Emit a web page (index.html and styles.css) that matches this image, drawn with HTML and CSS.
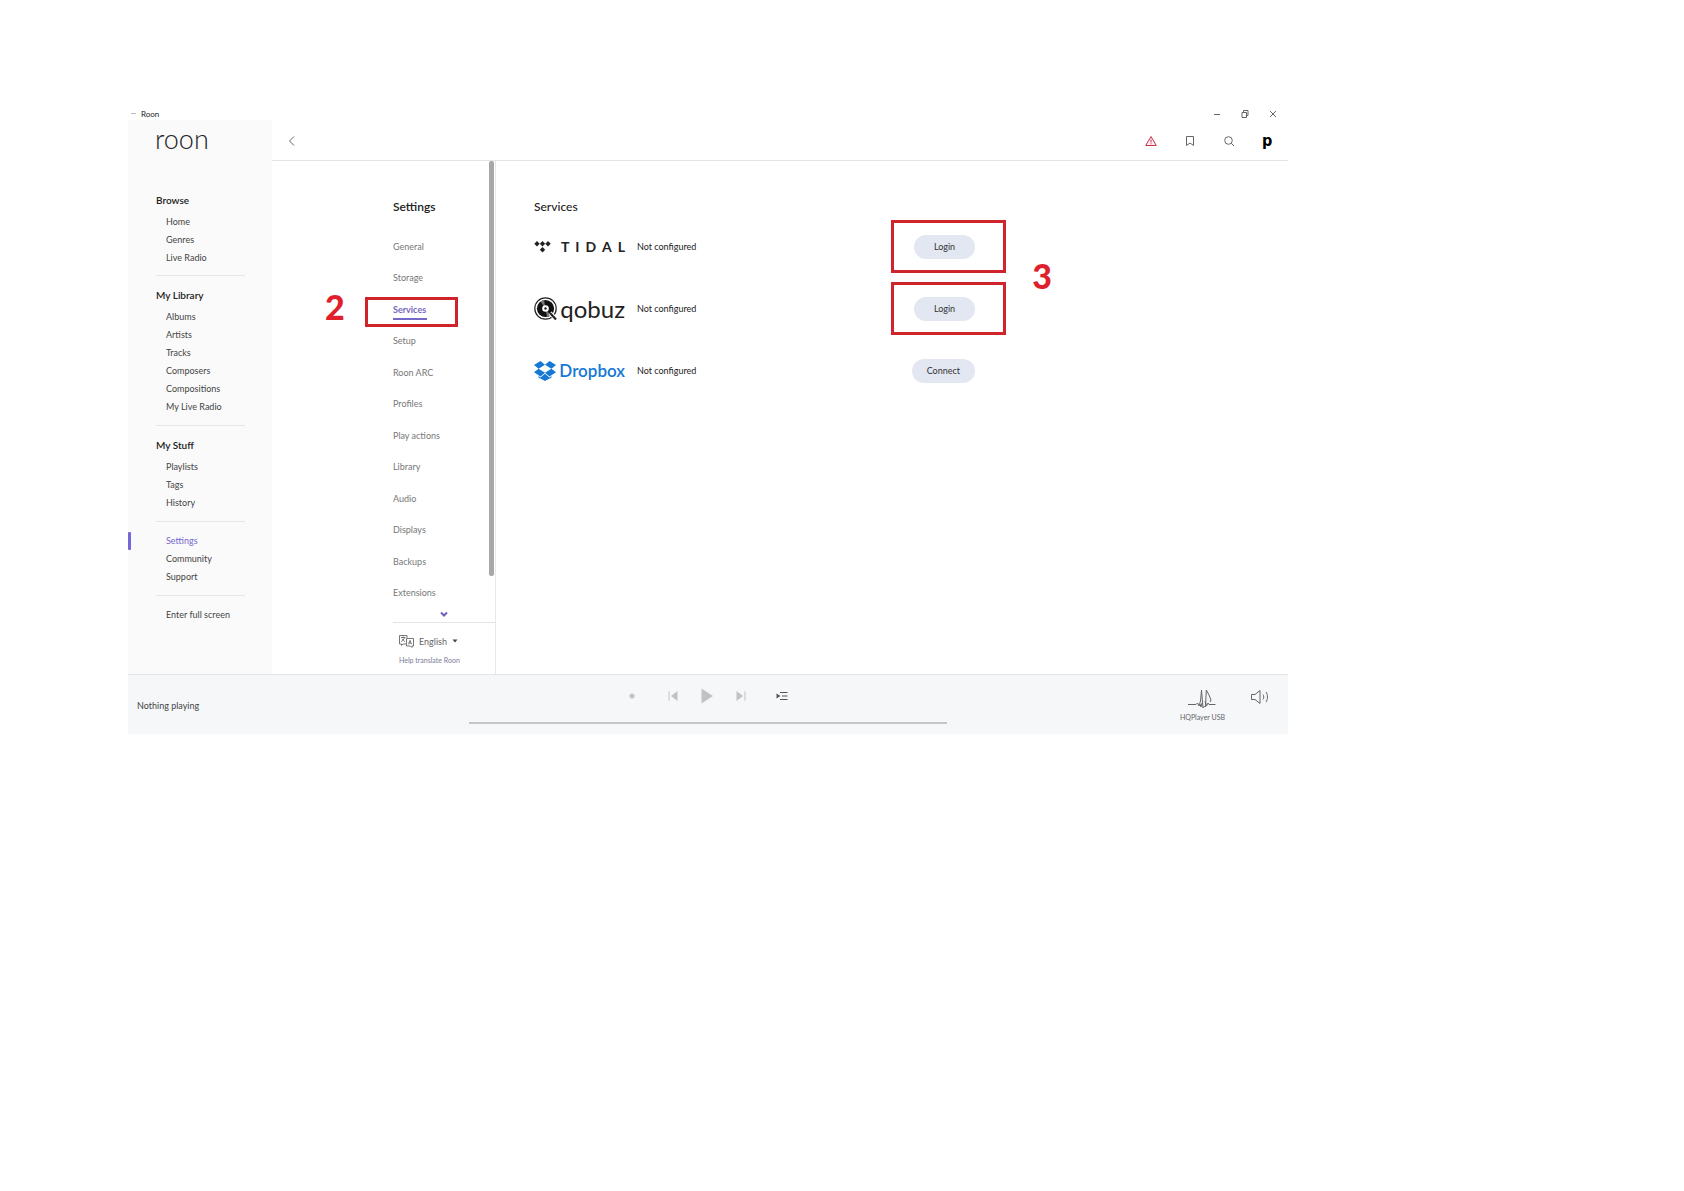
FILE: index.html
```html
<!DOCTYPE html>
<html lang="en">
<head>
  <meta charset="UTF-8">
  <meta name="viewport" content="width=device-width, initial-scale=1.0">
  <title>Roon</title>
  <link rel="stylesheet" href="styles.css">
</head>
<body>
  <div class="app">
    <header class="titlebar">
      <span class="titlebar-name">Roon</span>
      <div class="window-controls">
        <button aria-label="Minimize"><svg width="8" height="8" viewBox="0 0 8 8"><path d="M1 4.500h6"/></svg></button>
        <button aria-label="Restore"><svg width="8" height="8" viewBox="0 0 8 8"><path d="M1 2.500h4.500v5H1zM2.500 2.500v-2h4.500v5H5.500"/></svg></button>
        <button aria-label="Close"><svg width="8" height="8" viewBox="0 0 8 8"><path d="M1 1l6 6M7 1L1 7"/></svg></button>
      </div>
    </header>

    <div class="body">
      <aside class="sidebar">
        <a class="logo" href="#">roon</a>
        <nav>
          <div class="nav-section">
            <h3>Browse</h3>
            <a href="#">Home</a>
            <a href="#">Genres</a>
            <a href="#">Live Radio</a>
          </div>
          <div class="nav-section">
            <h3>My Library</h3>
            <a href="#">Albums</a>
            <a href="#">Artists</a>
            <a href="#">Tracks</a>
            <a href="#">Composers</a>
            <a href="#">Compositions</a>
            <a href="#">My Live Radio</a>
          </div>
          <div class="nav-section">
            <h3>My Stuff</h3>
            <a href="#">Playlists</a>
            <a href="#">Tags</a>
            <a href="#">History</a>
          </div>
          <div class="nav-section">
            <a class="active" href="#">Settings</a>
            <a href="#">Community</a>
            <a href="#">Support</a>
          </div>
          <div class="nav-section">
            <a href="#">Enter full screen</a>
          </div>
        </nav>
      </aside>

      <div class="content">
        <div class="topbar">
          <button aria-label="Back"><svg width="12" height="12" viewBox="0 0 12 12"><path d="M8 1.500L3.500 6L8 10.500"/></svg></button>
          <div class="topbar-icons">
            <button class="warning" aria-label="Warning"><svg width="12" height="12" viewBox="0 0 12 12"><path d="M6 1.500L11.300 10.500H.7zM6 4.500v3M6 8.300v1"/></svg></button>
            <button aria-label="Bookmarks"><svg width="12" height="12" viewBox="0 0 12 12"><path d="M2.500 1.500h7v9L6 8l-3.500 2.500z"/></svg></button>
            <button aria-label="Search"><svg width="12" height="12" viewBox="0 0 12 12"><circle cx="5.500" cy="5.500" r="3.800"/><path d="M8.300 8.300L11 11"/></svg></button>
            <button class="avatar" aria-label="Profile">p</button>
          </div>
        </div>

        <main class="panes">
          <section class="settings">
            <h2>Settings</h2>
            <ul class="settings-list">
              <li><a href="#">General</a></li>
              <li><a href="#">Storage</a></li>
              <li><a class="active" href="#">Services</a><span class="mark mark-menu"></span><span class="step step-menu">2</span></li>
              <li><a href="#">Setup</a></li>
              <li><a href="#">Roon ARC</a></li>
              <li><a href="#">Profiles</a></li>
              <li><a href="#">Play actions</a></li>
              <li><a href="#">Library</a></li>
              <li><a href="#">Audio</a></li>
              <li><a href="#">Displays</a></li>
              <li><a href="#">Backups</a></li>
              <li><a href="#">Extensions</a></li>
            </ul>
            <button class="more" aria-label="More settings"><svg width="8" height="6" viewBox="0 0 8 6"><path d="M1 1.500L4 4.500L7 1.500"/></svg></button>
            <div class="language">
              <div class="language-row">
                <svg width="15" height="13" viewBox="0 0 15 13">
                  <path d="M7 9H4L2.500 10.500V9H.5V.5h7.500V3M7.500 3.500h7v7.500H13v1.500L11.500 11h-4z"/>
                  <path d="M2 2.500h4.500M4.200 1.500v1M5.500 2.500C5 4.500 3.500 6 2.200 6.500M3 3.800C4 5.300 5 6 6 6.500M9.500 9.300L11 5.300l1.500 4M10 8h2"/>
                </svg>
                <select aria-label="Language"><option>English</option></select>
                <svg class="caret" width="6" height="4" viewBox="0 0 6 4"><path d="M.5 .5h5L3 3.500z"/></svg>
              </div>
              <a href="#">Help translate Roon</a>
            </div>
            <div class="scrollbar"></div>
          </section>

          <section class="services">
            <h2>Services</h2>
            <div class="service">
              <div class="service-logo tidal">
                <svg width="17" height="12" viewBox="0 0 17 12"><path d="M3 0l2.700 2.800L3 5.600.3 2.800zM8.500 0l2.700 2.800-2.700 2.800-2.700-2.800zM14 0l2.700 2.800L14 5.600l-2.700-2.800zM8.500 6l2.700 2.800-2.700 2.800-2.700-2.800z"/></svg>
                <div class="tidal-name"><span>T</span><span>I</span><span>D</span><span>A</span><span>L</span></div>
              </div>
              <span class="status">Not configured</span>
              <button class="pill">Login</button>
              <span class="mark mark-login"></span>
              <span class="step step-login">3</span>
            </div>
            <div class="service">
              <div class="service-logo qobuz">
                <svg width="24" height="24" viewBox="0 0 24 24">
                  <circle cx="11.500" cy="11.500" r="10.700" fill="#fff" stroke="#222" stroke-width="1.200"/>
                  <circle cx="11.500" cy="11.500" r="8.600" fill="#111"/>
                  <path d="M11.500 11.500L6.500 4.500A8.600 8.600 0 0 1 10 3zM11.500 11.500l5 7a8.600 8.600 0 0 1-3.500 1.500z" fill="#777"/>
                  <circle cx="11.500" cy="11.500" r="3.300" fill="#fff"/>
                  <circle cx="11.500" cy="11.500" r="1.200" fill="#222"/>
                  <path d="M16 16l6 6" fill="none" stroke="#fff" stroke-width="4"/>
                  <path d="M16 16l6 6.500" fill="none" stroke="#222" stroke-width="2.200"/>
                </svg>
                <span>qobuz</span>
              </div>
              <span class="status">Not configured</span>
              <button class="pill">Login</button>
              <span class="mark mark-login"></span>
            </div>
            <div class="service">
              <div class="service-logo dropbox">
                <svg width="22" height="20" viewBox="0 0 22 20"><path d="M6.500 0L11 3.700 4.600 7.700 0 4zM15.500 0L22 4l-4.600 3.700L11 3.700zM0 11.300l4.600-3.600 6.400 4L6.500 15.400zM22 11.300l-4.600-3.600-6.400 4 4.500 3.700zM11 12.700l4.500 3.700 2-1.300v1.300L11 20l-6.500-3.600v-1.300l2 1.300z"/></svg>
                <span>Dropbox</span>
              </div>
              <span class="status">Not configured</span>
              <button class="pill">Connect</button>
            </div>
          </section>
        </main>
      </div>
    </div>

    <footer class="player">
      <span class="now-playing">Nothing playing</span>
      <div class="transport">
        <div class="transport-buttons">
          <button aria-label="Stop"><svg width="16" height="16" viewBox="0 0 16 16"><circle cx="8" cy="8" r="2.500"/></svg></button>
          <div class="transport-main">
            <button aria-label="Previous"><svg width="16" height="16" viewBox="0 0 16 16"><path d="M12.500 3v10L6 8zM3.500 3.500h1v9h-1z"/></svg></button>
            <button aria-label="Play"><svg width="16" height="16" viewBox="0 0 16 16"><path d="M2.500 .5L14 8 2.500 15.500z"/></svg></button>
            <button aria-label="Next"><svg width="16" height="16" viewBox="0 0 16 16"><path d="M3.500 3v10L10 8zM11.500 3.500h1v9h-1z"/></svg></button>
          </div>
          <button class="queue" aria-label="Queue"><svg width="16" height="16" viewBox="0 0 16 16"><path d="M2.500 5.500v5L6.500 8zM6 4h7.500v1H6zM8 7.500h5.500v1H8zM6 11h7.500v1H6z"/></svg></button>
        </div>
        <progress class="seek" value="0" max="100" aria-label="Track position"></progress>
      </div>
      <div class="outputs">
        <button class="zone">
          <svg width="28" height="20" viewBox="0 0 28 20"><path d="M0 15.500h8l1.500-1.500 1.500 3 1.500-5 1-11 1.500 18 1.500-2 1 1 .8-17L21 6l2 5-1 2M17 12l1.500 5 1.500-3 1 1.500h6.500M12 15l1 3 1-4"/></svg>
          HQPlayer USB
        </button>
        <button class="volume" aria-label="Volume"><svg width="20" height="16" viewBox="0 0 20 16"><path d="M1.500 5.500H5l5-4v13l-5-4H1.500zM13 5.500c1 1.500 1 3.500 0 5M16 3c2 3 2 7 0 10"/></svg></button>
      </div>
    </footer>
  </div>
</body>
</html>
```
FILE: styles.css
```css
* {
  box-sizing: border-box;
}
body {
  margin: 0;
  padding: 107px 396px 40px 128px;
  background: #fff;
  color: #444;
  font-family: Lato, "Liberation Sans", sans-serif;
  font-size: 9px;
  line-height: 18px;
}
h2,
h3,
ul {
  margin: 0;
  padding: 0;
}
a {
  color: inherit;
  text-decoration: none;
}
button {
  padding: 0;
  border: 0;
  background: none;
  color: inherit;
  font: inherit;
}
svg {
  display: block;
  fill: none;
  stroke: #666;
}

/* window frame */
.titlebar {
  display: flex;
  align-items: center;
  justify-content: space-between;
  height: 13px;
  padding: 0 11px 0 13px;
}
.titlebar-name {
  position: relative;
  color: #222;
  font-size: 8px;
}
.titlebar-name::before {
  content: "";
  position: absolute;
  top: 8px;
  left: -10px;
  width: 5px;
  height: 1px;
  background: #bbb;
}
.window-controls {
  display: flex;
  gap: 20px;
}
.body {
  display: flex;
}

/* sidebar */
.sidebar {
  flex: none;
  width: 144px;
  background: #fafafa;
}
.logo {
  display: block;
  height: 71px;
  padding: 3px 0 0 27px;
  color: #222;
  font-size: 27px;
  font-weight: 300;
  line-height: 32px;
}
.nav-section {
  position: relative;
  margin: 0 27px 0 28px;
  padding-bottom: 9px;
}
.nav-section:first-child {
  padding-bottom: 8px;
}
.nav-section + .nav-section {
  padding-top: 10px;
  border-top: 1px solid #e6e6e6;
}
.nav-section h3 {
  margin-bottom: 4px;
  color: #222;
  font-size: 10px;
  font-weight: 600;
}
.nav-section a {
  display: block;
  padding-left: 10px;
  white-space: nowrap;
}
.nav-section .active {
  color: #7468d0;
}
.nav-section .active::before {
  content: "";
  position: absolute;
  left: -28px;
  width: 3px;
  height: 18px;
  border-radius: 1px;
  background: #7468d8;
}

/* top bar */
.content {
  flex: 1;
  display: flex;
  flex-direction: column;
}
.topbar {
  display: flex;
  align-items: center;
  justify-content: space-between;
  height: 41px;
  padding: 2px 16px 0 14px;
  border-bottom: 1px solid #e4e4e4;
}
.topbar-icons {
  display: flex;
  align-items: center;
  gap: 27px;
}
.warning svg {
  stroke: #c8324e;
  fill: #fdeef0;
}
.avatar {
  width: 10px;
  color: #000;
  font-family: "Liberation Sans Narrow", "DejaVu Sans Condensed", sans-serif;
  font-size: 16px;
  font-weight: 700;
}

/* settings menu */
.panes {
  flex: 1;
  display: flex;
}
.settings {
  position: relative;
  display: flex;
  flex-direction: column;
  width: 224px;
  padding: 37px 0 5px 121px;
  border-right: 1px solid #e8e8e8;
}
h2 {
  color: #222;
  font-size: 12px;
  font-weight: 600;
}
.settings-list {
  display: grid;
  grid-auto-rows: 1fr;
  align-items: center;
  height: 378px;
  margin-top: 15px;
  color: #777;
  list-style: none;
}
.settings-list li {
  position: relative;
}
.settings-list .active {
  display: inline-block;
  color: #7468c0;
  font-weight: 700;
}
.settings-list .active::after {
  content: "";
  position: absolute;
  top: 17px;
  left: 0;
  width: 34px;
  height: 2px;
  background: #7468c8;
}
.more {
  width: 102px;
  height: 9px;
  margin-bottom: 4px;
}
.more svg {
  margin: 0 auto;
  stroke: #6c5fc0;
  stroke-width: 2;
}
.language {
  padding: 8px 0 0 6px;
  border-top: 1px solid #e4e4e4;
  color: #7d7a99;
  font-size: 7px;
}
.language-row {
  display: flex;
  align-items: center;
  gap: 5px;
  height: 20px;
}
.language-row svg {
  stroke: #777;
}
.language-row .caret {
  fill: #444;
  stroke: none;
}
.language select {
  padding: 0;
  border: 0;
  appearance: none;
  background: none;
  color: #666;
  font: 9px Lato, sans-serif;
}
.scrollbar {
  position: absolute;
  top: 0;
  right: 1px;
  width: 5px;
  height: 415px;
  border-radius: 2px;
  background: #a8a8a8;
}

/* services */
.services {
  flex: 1;
  padding: 37px 38px;
}
.services h2 {
  font-weight: 500;
}
.service {
  position: relative;
  display: flex;
  align-items: center;
  max-width: 441px;
  height: 62px;
}
.service-logo {
  display: flex;
  align-items: center;
  justify-content: space-between;
  width: 91px;
  color: #222;
}
.tidal svg {
  fill: #222;
  stroke: none;
}
.tidal-name {
  display: flex;
  justify-content: space-between;
  width: 64px;
  font-size: 14px;
  font-weight: 700;
}
.qobuz svg {
  stroke: none;
}
.qobuz span {
  font-size: 24px;
}
.dropbox {
  color: #1478d4;
  font-size: 17px;
  font-weight: 600;
}
.dropbox svg {
  fill: #1478d4;
  stroke: none;
}
.status {
  margin-left: 12px;
  color: #222;
}
.pill {
  height: 24px;
  margin-left: auto;
  padding: 0 15px;
  min-width: 61px;
  border-radius: 12px;
  background: #e2e7f1;
  color: #333;
}

/* walkthrough marks */
.mark {
  position: absolute;
  border: 3px solid #d0242c;
}
.mark-menu {
  top: -4px;
  left: -28px;
  width: 93px;
  height: 30px;
}
.mark-login {
  top: 4px;
  right: -31px;
  width: 115px;
  height: 53px;
}
.step {
  position: absolute;
  color: #e01f2d;
  font-size: 34px;
  font-weight: 900;
  line-height: 40px;
}
.step-menu {
  top: -14px;
  left: -68px;
}
.step-login {
  top: 40px;
  right: -77px;
}

/* player */
.player {
  display: grid;
  grid-template-columns: 1fr 478px 1fr;
  height: 60px;
  border-top: 1px solid #e2e5e6;
  background: #f5f7f9;
}
.now-playing {
  padding: 22px 0 0 9px;
}
.transport {
  padding-top: 13px;
}
.transport-buttons {
  display: flex;
  justify-content: center;
  gap: 25px;
  padding-right: 2px;
}
.transport-main {
  display: flex;
  gap: 18px;
}
.transport svg {
  fill: #c0c2c4;
  stroke: none;
}
.transport .queue svg {
  fill: #555;
}
.seek {
  display: block;
  width: 100%;
  height: 2px;
  margin-top: 18px;
  border: 0;
  appearance: none;
}
.seek::-webkit-progress-bar {
  background: #c4c6c8;
}
.outputs {
  display: flex;
  align-items: flex-start;
  justify-content: flex-end;
  gap: 25px;
  padding: 14px 18px 0 0;
}
.zone {
  color: #666;
  font-size: 7px;
  line-height: 16px;
}
.zone svg {
  margin: 0 auto;
}
```
